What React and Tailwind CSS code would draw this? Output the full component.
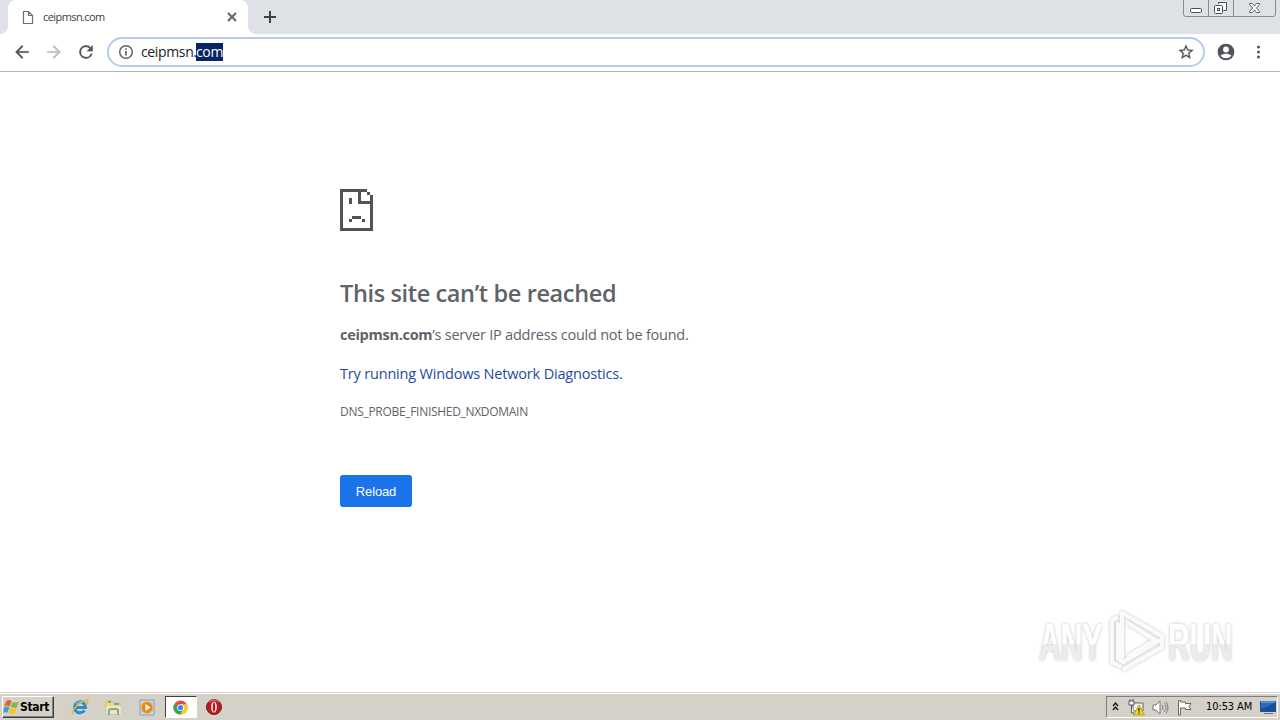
import React from "react";

function PageIcon() {
  return (
    <svg width="12" height="15" viewBox="0 0 12 15" fill="none" stroke="#6b6e72" strokeWidth="1.200">
      <path d="M1.500 1.500h5l4 4v8h-9zM6.500 1.500v4h4" />
    </svg>
  );
}

function TabStrip() {
  return (
    <div className="flex h-[34px] shrink-0 items-start bg-[#dee1e6]">
      <div className="relative ml-2 flex h-[34px] w-[240px] items-center rounded-t-lg bg-white pl-[14px]">
        <svg className="absolute bottom-0 -left-2" width="8" height="8"><path d="M8 0v8H0a8 8 0 0 0 8-8" fill="#fff" /></svg>
        <svg className="absolute -right-2 bottom-0" width="8" height="8"><path d="M0 0v8h8a8 8 0 0 1-8-8" fill="#fff" /></svg>
        <PageIcon />
        <span className="ml-[9px] w-[180px] text-[11px] tracking-[-0.58px] text-[#3c4043]">ceipmsn.com</span>
        <svg className="ml-1" width="10" height="10" viewBox="0 0 10 10" stroke="#5f6368" strokeWidth="1.900"><path d="M1 1l8 8M9 1L1 9" /></svg>
      </div>
      <svg className="mt-[11px] ml-4" width="12" height="12" stroke="#3c4043" strokeWidth="2"><path d="M6 0v12M0 6h12" /></svg>
      <svg className="mr-[4px] ml-auto" width="93" height="17" fill="none" stroke="#888c94">
        <path d="M.5 0v14q0 2.500 2.500 2.500h87q2.500 0 2.500-2.500V0M25.500 0v16M50.500 0v16" />
        <g stroke="#4c5058">
          <rect x="7.500" y="8.500" width="11" height="4" rx="1" fill="#fff" />
          <path d="M35.500 4V2.500h8v8h-3" fill="#f6f7f8" />
          <rect x="31.500" y="5.500" width="8" height="8" rx="1" fill="#fff" />
          <rect x="34.500" y="8.500" width="2" height="2" />
          <path d="M66.500 3.500h3l2 2.500 2-2.500h3v1l-3 3.500 3 3.500v1h-3l-2-2.500-2 2.500h-3v-1l3-3.500-3-3.500z" fill="#fff" strokeWidth=".9" />
        </g>
      </svg>
    </div>
  );
}

function Toolbar() {
  return (
    <div className="flex h-[38px] shrink-0 items-center border-b border-[#b1b4b8] bg-white pb-px">
      <svg className="ml-[12px]" width="20" height="20" viewBox="0 0 24 24" fill="#505357" stroke="#505357" strokeWidth=".3"><path d="M20 11H7.830l5.590-5.590L12 4l-8 8 8 8 1.410-1.410L7.830 13H20v-2z" /></svg>
      <svg className="ml-3" width="20" height="20" viewBox="0 0 24 24" fill="#babcbe" stroke="#babcbe" strokeWidth=".3"><path d="M12 4l-1.410 1.410L16.170 11H4v2h12.170l-5.580 5.590L12 20l8-8z" /></svg>
      <svg className="ml-3" width="20" height="20" viewBox="0 0 24 24" fill="#505357" stroke="#505357" strokeWidth=".3"><path d="M17.650 6.350A7.960 7.960 0 0 0 12 4a8 8 0 1 0 7.730 10h-2.080A6 6 0 1 1 12 6c1.660 0 3.140.69 4.220 1.780L13 11h7V4z" /></svg>
      <div className="ml-[11px] flex h-[30px] w-[1098px] items-center rounded-full border-2 border-[#b6cbed] bg-white pl-[9px]">
        <svg width="16" height="16" viewBox="0 0 16 16" fill="none" stroke="#5f6368" strokeWidth="1.500"><circle cx="8" cy="8" r="6.300" /><path d="M8 7v4.500M8 4.200v1.600" strokeWidth="1.700" /></svg>
        <span className="ml-[7px] flex text-[14px] leading-[18px] tracking-[-0.36px] text-[#202124]"><span className="w-[55px]">ceipmsn.</span><span className="w-[27px] bg-[#082466] text-white">com</span></span>
        <svg className="mr-2 ml-auto" width="18" height="18" viewBox="0 0 24 24" fill="#505357" stroke="#505357" strokeWidth=".3"><path d="M22 9.240l-7.190-.62L12 2 9.190 8.630 2 9.240l5.460 4.730L5.820 21 12 17.270 18.180 21l-1.630-7.030zM12 15.400l-3.760 2.270 1-4.280-3.320-2.880 4.380-.38L12 6.100l1.710 4.040 4.380.38-3.320 2.880 1 4.280z" /></svg>
      </div>
      <svg className="ml-[11px]" width="20" height="20" viewBox="0 0 24 24" fill="#505357"><path d="M12 2a10 10 0 1 0 0 20 10 10 0 0 0 0-20zm0 3.500a3.500 3.500 0 1 1 0 7 3.500 3.500 0 0 1 0-7zm0 14a8.300 8.300 0 0 1-6.500-3.100C6.900 14.600 10.200 14 12 14s5.100.6 6.500 2.400a8.300 8.300 0 0 1-6.500 3.100z" /></svg>
      <svg className="ml-[14px]" width="16" height="16" fill="#505357"><circle cx="8.500" cy="3" r="1.500" /><circle cx="8.500" cy="8" r="1.500" /><circle cx="8.500" cy="13" r="1.500" /></svg>
    </div>
  );
}

function SadPage() {
  return (
    <svg width="33" height="42" viewBox="0 0 33 42" fill="#535353" shapeRendering="crispEdges">
      <path d="M0 0h27v3H3v36h27V15H18V3h3v9h12v30H0z" />
      <path d="M27 3h3v3h-3zM30 6h3v6h-3zM9 9h3v6H9zM12 27h9v3h-9zM9 30h3v3H9zM22 30h3v3h-3z" />
    </svg>
  );
}

function Watermark() {
  return (
    <svg className="absolute top-[605px] left-[1030px]" width="240" height="75" viewBox="0 0 240 75">
      <defs>
        <filter id="shade" x="-10%" y="-20%" width="120%" height="140%">
          <feDropShadow dx="0" dy="0" stdDeviation="1.500" floodColor="#777" floodOpacity=".5" />
        </filter>
        <linearGradient id="letter" x1="0" y1="0" x2="0" y2="1">
          <stop offset=".52" stopColor="#fff" />
          <stop offset=".54" stopColor="#ececec" />
        </linearGradient>
      </defs>
      <g filter="url(#shade)">
        <g fill="url(#letter)" fontFamily="Liberation Sans" fontWeight="bold" fontSize="51">
          <text transform="translate(9 55) scale(.59 1)">ANY</text>
          <text transform="translate(138 55) scale(.585 1)">RUN</text>
        </g>
        <g fill="none" stroke="#fafafa" strokeWidth="4" strokeLinejoin="round" strokeLinecap="round">
          <path d="M92 52V8l40 23M86 13l-4 3v41l8 4M98 18l27 17-26 16M88 19v35l5 3 37-22M94 64l38-22V31" />
        </g>
      </g>
    </svg>
  );
}

function ErrorPage() {
  return (
    <main className="flex h-[620px] shrink-0 flex-col items-start bg-white pl-[340px] text-[#5f6368]">
      <div className="mt-[117px]"><SadPage /></div>
      <h1 className="mt-[48px] text-[23.5px] leading-[29px] font-semibold tracking-[-0.37px] whitespace-nowrap text-[#606367]">This site can’t be reached</h1>
      <p className="mt-[16px] text-[14.5px] leading-[22px] tracking-[-0.23px] whitespace-nowrap"><b className="tracking-[-0.28px]">ceipmsn.com</b>’s server IP address could not be found.</p>
      <a className="mt-[17px] text-[14.5px] leading-[22px] tracking-[-0.18px] whitespace-nowrap text-[#1e4b9e]">Try running Windows Network Diagnostics.</a>
      <p className="mt-[18px] text-[12px] leading-[18px] tracking-[-0.3px] whitespace-nowrap">DNS_PROBE_FINISHED_NXDOMAIN</p>
      <button className="mt-[54px] h-8 w-[72px] rounded-[3px] bg-[#1a73e8] pt-px font-['Liberation_Sans',sans-serif] text-[13px] tracking-[-0.15px] text-white">Reload</button>
    </main>
  );
}

function Taskbar() {
  return (
    <footer className="flex h-7 shrink-0 items-end border-t border-[#d4d0c8] bg-[#d5d1c9] pb-[2px] font-['DejaVu_Sans_Condensed','DejaVu_Sans',sans-serif] shadow-[inset_0_1px_0_#fff]">
      <button className="ml-[2px] flex h-[22px] w-[52px] items-center border border-t-white border-r-[#404040] border-b-[#404040] border-l-white text-[12px] font-bold tracking-[-0.35px] text-black shadow-[inset_-1px_-1px_0_#808080]">
        <svg className="shrink-0" width="17" height="17" viewBox="0 0 16 16">
          <path d="M3 2q3-2 5 0L6 7Q4 5 1 7z" fill="#e75e28" /><path d="M9 3q3 1 6-1l-2 6q-3 1-6-1z" fill="#7dbb45" />
          <path d="M1 8q3-2 5 0l-2 5q-2-1-4 0z" fill="#3f9bd9" /><path d="M7 8q3 2 6 1l-2 5q-3 1-6-1z" fill="#f6c62f" />
        </svg>
        <span>Start</span>
      </button>
      <svg className="mb-[2px] ml-[17px]" width="18" height="18" viewBox="0 0 18 18" fill="none">
        <path d="M13.500 12.500A5.500 5.500 0 1 1 14.500 9.500H5" stroke="#278bd2" strokeWidth="3" />
        <path d="M2 16C-1 13 10 2 16 2c2 1 0 4-1 5" stroke="#e4b52c" strokeWidth="1.500" />
        <path d="M5 6q4-4 7-1" stroke="#78cbf1" />
      </svg>
      <svg className="mb-[2px] ml-[16px]" width="17" height="17" viewBox="0 0 17 17">
        <path d="M1 2h6l1 2h7v11H1z" fill="#f0d689" stroke="#d5bd70" /><path d="M3 3h3" stroke="#67bc55" strokeWidth="2" /><path d="M9 5h5" stroke="#67acd1" strokeWidth="2" />
        <path d="M1 7h15v8H1z" fill="#f8e5a4" /><path d="M4 16v-4q0-2 2-2h5q2 0 2 2v4" fill="none" stroke="#67acd1" strokeWidth="2" />
      </svg>
      <svg className="mb-[2px] ml-[17px]" width="17" height="17" viewBox="0 0 17 17">
        <path d="M1 1h14v15H1z" fill="#c1d7e7" stroke="#79a4c4" /><circle cx="8" cy="8.500" r="6" fill="#ee8619" stroke="#f9bf62" /><path d="M6.500 5v7l5-3.500z" fill="#fff" />
      </svg>
      <div className="ml-[9px] flex h-[22px] w-[32px] items-center justify-center border border-t-[#404040] border-r-white border-b-white border-l-[#404040] bg-white pr-[1px]">
        <svg width="15" height="15" viewBox="0 0 16 16">
          <circle cx="8" cy="8" r="7.500" fill="#e64b3c" /><path d="M1.500 4.250A7.500 7.500 0 0 0 8 15.500L11 9.750 8 8z" fill="#36a75a" />
          <path d="M8 4.600h6.700A7.500 7.500 0 0 1 8 15.500l3-5.800z" fill="#f7ca37" /><circle cx="8" cy="8" r="3.600" fill="#fff" /><circle cx="8" cy="8" r="2.800" fill="#4284ee" />
        </svg>
      </div>
      <svg className="mb-[3px] ml-[9px]" width="16" height="16" viewBox="0 0 16 16">
        <circle cx="8" cy="8" r="7.500" fill="#b51d20" stroke="#781c1b" /><path d="M3 3q5-4 10 0" stroke="#e58784" fill="none" /><ellipse cx="8" cy="8" rx="2.800" ry="5.500" fill="#fff" /><ellipse cx="8" cy="8" rx="1.300" ry="4.700" fill="#b01e20" />
      </svg>
      <div className="mr-[2px] ml-auto flex h-[22px] w-[172px] items-center border border-t-[#808080] border-r-white border-b-white border-l-[#808080]">
        <svg className="mb-[2px] ml-[5px]" width="7" height="9" fill="none" stroke="#111" strokeWidth="1.300"><path d="M1 4l2.500-3L6 4M1 8l2.500-3L6 8" /></svg>
        <svg className="ml-[9px]" width="17" height="17" viewBox="0 0 17 17">
          <path d="M5 4h10v8H5z" fill="#e8eeee" stroke="#666" /><path d="M7 14h6" stroke="#666" /><path d="M1 2h5v4H1zM2 0v2M5 0v2M3.500 6v8H6" fill="#fff" stroke="#555" /><path d="M11 6l5.500 10h-11z" fill="#f4d51e" stroke="#aa8b18" strokeWidth=".7" /><path d="M11 9v3.500M11 13.500v1.300" stroke="#222" strokeWidth="1.300" />
        </svg>
        <svg className="ml-[7px]" width="17" height="17" viewBox="0 0 17 17" fill="none" stroke="#777"><path d="M1 6h3l4-4v13l-4-4H1z" fill="#fff" /><path d="M10 6q2 2.500 0 5M12 4q4 4.500 0 9M14 2.500q4 6 0 12" /></svg>
        <svg className="ml-[7px]" width="17" height="17" viewBox="0 0 17 17"><path d="M2.500 16V1.500h2V3h5v1.500h5.500l-2 3 2 3H9.500V9h-5v7z" fill="#fff" stroke="#666" /></svg>
        <span className="ml-[13px] w-[48px] text-[11px] tracking-[-0.1px] whitespace-nowrap text-black">10:53 AM</span>
        <svg className="mt-[2px] ml-[6px]" width="16" height="14" viewBox="0 0 16 14"><path d="M.5.5h15v10H.5z" fill="#276bc0" stroke="#284e83" /><path d="M1 8Q9 6 15 1v9H1z" fill="#194f9d" /><path d="M1 1h14" stroke="#85c6ee" /><path d="M4 12.500h9" stroke="#6c7881" /></svg>
      </div>
    </footer>
  );
}

export default function App() {
  return (
    <div className="relative flex h-[720px] w-[1280px] flex-col overflow-hidden bg-white font-['Open_Sans','Noto_Sans',sans-serif]">
      <TabStrip />
      <Toolbar />
      <ErrorPage />
      <Taskbar />
      <Watermark />
    </div>
  );
}
